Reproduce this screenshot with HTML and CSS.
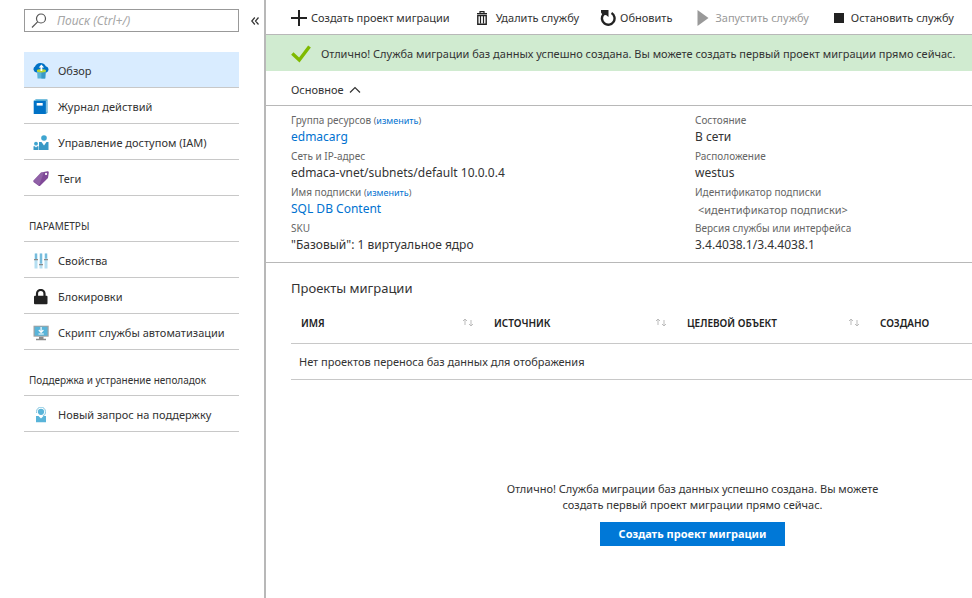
FILE: index.html
```html
<!DOCTYPE html>
<html lang="ru">
<head>
<meta charset="utf-8">
<meta name="viewport" content="width=device-width, initial-scale=1">
<title>Служба миграции баз данных</title>
<link rel="stylesheet" href="styles.css">
</head>
<body>
<div class="app">
  <aside class="sidebar">
    <div class="search-row">
      <label class="search">
        <svg class="search-icon" width="16" height="16" viewBox="0 0 16 16" fill="none" stroke="#555" stroke-width="1.2"><circle cx="10" cy="5.500" r="4.500"/><path d="M6.800 8.700 1 14.500"/></svg>
        <input type="search" placeholder="Поиск (Ctrl+/)" aria-label="Поиск">
      </label>
      <button class="collapse" type="button" aria-label="Свернуть меню">
        <svg width="8" height="8" viewBox="0 0 8 8" fill="none" stroke="#333" stroke-width="1.200"><path d="M3.800.5.800 4l3 3.500M7.500.5l-3 3.500 3 3.500"/></svg>
      </button>
    </div>

    <nav>
      <ul class="menu">
        <li><a class="item active" href="#">
          <svg width="16" height="16" viewBox="0 0 16 16"><path d="M3.500 9.500A3.200 3.200 0 0 1 2 3.600 6 6 0 0 1 12.800 3.200 3.300 3.300 0 0 1 13.500 9.500z" fill="#0072c6"/><path d="M4 7.500h8.800l-.6 8H4.500z" fill="#59b4d9"/><path d="M8.400 7.500h4.400l-.6 8H8.400z" fill="#3999c6"/><ellipse cx="8.400" cy="7.700" rx="4.600" ry="1.700" fill="#b8d432"/><path d="M7.500 8V4.500H5.700l2.700-3 2.700 3H9.300V8z" fill="#fff"/></svg>
          Обзор</a></li>
        <li><a class="item" href="#">
          <svg width="16" height="16" viewBox="0 0 16 16"><path d="M2.500.5H14.500v13.500L12.500 15z" fill="#3999c6"/><path d="M12.800 1.500h.9v12h-.9z" fill="#a8d4ec"/><path d="M.7 1.700h12V15H.7z" fill="#0072c6"/><path d="M.7 1.700 2.500.5h12l-1.800 1.200z" fill="#59b4d9"/><path d="M3.700 4h6v2.600h-6z" fill="#fff"/></svg>
          Журнал действий</a></li>
        <li><a class="item" href="#">
          <svg width="16" height="16" viewBox="0 0 16 16"><circle cx="11" cy="3" r="2.800" fill="#3fa5d0"/><path d="M6 15V7h2.500L11 10.500 13.500 7h2v8z" fill="#3999c6"/><circle cx="3" cy="8.700" r="1.900" fill="#3fa5d0"/><path d="M.5 15v-3.800h1.300L3 12.600l1.200-1.400h1.300V15z" fill="#3999c6"/></svg>
          Управление доступом (IAM)</a></li>
        <li><a class="item" href="#">
          <svg width="16" height="16" viewBox="0 0 16 16"><path fill-rule="evenodd" d="M.3 9.700 8 1.500 14.500.2q1.300-.1 1.300 1.200L15 7l-7.800 7.700q-.8.700-1.600 0L.5 11zM13 1.800a1.100 1.100 0 1 0 .1 0z" fill="#804998"/><path d="m.3 9.700 7.700-8.200 3-.6-5 13.800z" fill="#a07ab5" opacity=".5"/></svg>
          Теги</a></li>
      </ul>

      <h2 class="group">ПАРАМЕТРЫ</h2>
      <ul class="menu">
        <li><a class="item" href="#">
          <svg width="16" height="16" viewBox="0 0 16 16"><path d="M1.500.5h3v15h-3zM6.500.5h3v15h-3zM11.500.5h3v15h-3z" fill="#b5dff2"/><path d="M2.500.5h1v6h-1zM7.500.5h1v10h-1zM12.500.5h1v5h-1z" fill="#3999c6"/><path d="M1 6h4v1.200H1zM6 11h4v1.200H6zM11 6h4v1.200h-4z" fill="#8a8a8a"/></svg>
          Свойства</a></li>
        <li><a class="item" href="#">
          <svg width="16" height="16" viewBox="0 0 16 16"><path d="M4 8V4.700a3.700 3.700 0 0 1 7.500 0V8" fill="none" stroke="#222" stroke-width="2.200"/><rect x="1" y="6.800" width="13.500" height="8.500" rx="1" fill="#222"/></svg>
          Блокировки</a></li>
        <li><a class="item" href="#">
          <svg width="16" height="16" viewBox="0 0 16 16"><path d="M.5.700h15.200v11H.5z" fill="#a0a1a2"/><path d="M1.700 1.700h12.800v9H1.700z" fill="#59b4d9"/><path d="M6 11.700h4.500v2H13v1.500H3v-1.500h3z" fill="#8a8a8a"/><path d="M8.100 2v5M5.800 5l2.300 2.300L10.400 5M5.500 9h5.300" stroke="#fff" stroke-width="1.200" fill="none"/></svg>
          Скрипт службы автоматизации</a></li>
      </ul>

      <h2 class="group">Поддержка и устранение неполадок</h2>
      <ul class="menu">
        <li><a class="item" href="#">
          <svg width="16" height="16" viewBox="0 0 16 16"><circle cx="8" cy="4.800" r="3.100" fill="#59b4d9"/><path d="M3.600 6V4.500a4.400 4.400 0 0 1 8.800 0V6q0 2.300-2.500 2.600" fill="none" stroke="#7fc4e0"/><path d="M3 15.300V9h2.500L8 11.500 10.500 9H13v6.300z" fill="#59b4d9"/></svg>
          Новый запрос на поддержку</a></li>
      </ul>
    </nav>
  </aside>

  <main class="main">
    <div class="toolbar">
      <button class="tool" type="button"><svg width="16" height="16" viewBox="0 0 16 16"><path d="M0 8h16M8 0v16" stroke="#222" stroke-width="2"/></svg>Создать проект миграции</button>
      <button class="tool delete" type="button"><svg width="12" height="14" viewBox="0 0 12 14"><path d="M1 2.700h10M4 2V.6h4V2" fill="none" stroke="#222" stroke-width="1.200"/><path d="M1.800 4.500h8.400v8.700H1.800z" fill="none" stroke="#222" stroke-width="1.400"/><path d="M4.500 5v7.500M7.500 5v7.500" stroke="#222" stroke-width="1.200"/></svg>Удалить службу</button>
      <button class="tool refresh" type="button"><svg width="16" height="16" viewBox="0 0 16 16"><path d="M11.500 3A6.300 6.300 0 1 1 3.300 4.500" fill="none" stroke="#222" stroke-width="2.400"/><path d="M1 0h7.500v7L6 5 3 5.500 1 2.500z" fill="#222"/></svg>Обновить</button>
      <button class="tool start" type="button" disabled><svg width="12" height="16" viewBox="0 0 12 16"><path d="M.5 0 11.500 8 .5 16z" fill="#999"/></svg>Запустить службу</button>
      <button class="tool stop" type="button"><svg width="10" height="10" viewBox="0 0 10 10"><path d="M0 0h10v10H0z" fill="#222"/></svg>Остановить службу</button>
    </div>

    <div class="banner" role="status">
      <svg width="20" height="18" viewBox="0 0 20 18"><path d="m1.300 8.500 7 6.500L18.500 1.500" fill="none" stroke="#7fba00" stroke-width="3.400"/></svg>
      <span>Отлично! Служба миграции баз данных успешно создана. Вы можете создать первый проект миграции прямо сейчас.</span>
    </div>

    <button class="essentials-toggle" type="button" aria-expanded="true">Основное
      <svg width="12" height="8" viewBox="0 0 12 8"><path d="m1 6.500 5-5 5 5" fill="none" stroke="#333" stroke-width="1.200"/></svg>
    </button>

    <div class="essentials">
      <dl>
        <dt>Группа ресурсов <small>(<a href="#">изменить</a>)</small></dt><dd><a href="#">edmacarg</a></dd>
        <dt>Сеть и IP-адрес</dt><dd>edmaca-vnet/subnets/default 10.0.0.4</dd>
        <dt>Имя подписки <small>(<a href="#">изменить</a>)</small></dt><dd><a href="#">SQL DB Content</a></dd>
        <dt>SKU</dt><dd>"Базовый": 1 виртуальное ядро</dd>
      </dl>
      <dl>
        <dt>Состояние</dt><dd>В сети</dd>
        <dt>Расположение</dt><dd>westus</dd>
        <dt>Идентификатор подписки</dt><dd class="placeholder">&lt;идентификатор подписки&gt;</dd>
        <dt>Версия службы или интерфейса</dt><dd>3.4.4038.1/3.4.4038.1</dd>
      </dl>
    </div>

    <section class="projects">
      <h1>Проекты миграции</h1>
      <table>
        <thead>
          <tr>
            <th scope="col"><div class="head">ИМЯ <svg width="12" height="10" viewBox="0 0 12 10"><path d="M3 7V1M1 3l2-2 2 2M9 2v6M7 6l2 2 2-2" fill="none" stroke="#bbb"/></svg></div></th>
            <th scope="col"><div class="head">ИСТОЧНИК <svg width="12" height="10" viewBox="0 0 12 10"><path d="M3 7V1M1 3l2-2 2 2M9 2v6M7 6l2 2 2-2" fill="none" stroke="#bbb"/></svg></div></th>
            <th scope="col"><div class="head">ЦЕЛЕВОЙ ОБЪЕКТ <svg width="12" height="10" viewBox="0 0 12 10"><path d="M3 7V1M1 3l2-2 2 2M9 2v6M7 6l2 2 2-2" fill="none" stroke="#bbb"/></svg></div></th>
            <th scope="col"><div class="head">СОЗДАНО</div></th>
          </tr>
        </thead>
        <tbody>
          <tr><td colspan="4">Нет проектов переноса баз данных для отображения</td></tr>
        </tbody>
      </table>
    </section>

    <section class="empty">
      <p>Отлично! Служба миграции баз данных успешно создана. Вы можете создать первый проект миграции прямо сейчас.</p>
      <button class="primary" type="button">Создать проект миграции</button>
    </section>
  </main>
</div>
</body>
</html>
```
FILE: styles.css
```css
* { box-sizing: border-box; }

body {
  margin: 0;
  background: #fff;
  color: #333;
  font: 11px/16px "Noto Sans", "Open Sans", sans-serif;
}

button {
  border: 0;
  padding: 0;
  background: none;
  color: inherit;
  font: inherit;
}

svg { flex: none; display: block; }
a { color: #0072d0; text-decoration: none; }

.app {
  display: grid;
  grid-template-columns: 266px minmax(0, 1fr);
  min-height: 100vh;
}

/* Sidebar */
.sidebar {
  border-right: 2px solid #b8b8b8;
  padding: 9px 0 0 24px;
}

.search-row { display: flex; align-items: center; gap: 12px; }

.search {
  display: flex;
  align-items: center;
  gap: 8px;
  width: 215px;
  height: 23px;
  padding: 0 6px;
  border: 1px solid #999;
}

.search input {
  flex: 1;
  min-width: 0;
  border: 0;
  padding: 0 2px;
  outline: 0;
  background: none;
  color: #333;
  font: inherit;
  font-size: 12px;
}
.search input::placeholder { color: #a6a6a6; font-style: italic; }

.menu { list-style: none; margin: 0; padding: 0; width: 215px; }
nav { margin-top: 20px; }

.item {
  display: flex;
  align-items: center;
  gap: 9px;
  height: 36px;
  padding: 2px 0 0 9px;
  border-bottom: 1px solid #c8c8c8;
  color: #333;
  white-space: nowrap;
}
.item.active { background: #d9ecff; }

.group {
  width: 215px;
  height: 46px;
  margin: 0;
  padding: 22px 0 0 5px;
  border-bottom: 1px solid #c8c8c8;
  font-size: 10px;
  font-weight: 400;
  white-space: nowrap;
}

/* Main area */
.toolbar {
  display: flex;
  align-items: center;
  height: 35px;
  padding: 1px 0 0 25px;
  border-bottom: 1px solid #b8b8b8;
  white-space: nowrap;
}
.tool { display: flex; align-items: center; gap: 4px; }
.tool:disabled { color: #999; }
.tool.delete { gap: 8px; margin-left: 26px; }
.tool.refresh { margin-left: 21px; }
.tool.start { gap: 6px; margin-left: 25px; }
.tool.stop { gap: 7px; margin-left: 25px; }

.banner {
  display: flex;
  align-items: center;
  gap: 10px;
  height: 36px;
  padding: 2px 0 0 25px;
  background: #d0ebd0;
  white-space: nowrap;
}

.essentials-toggle {
  display: flex;
  align-items: center;
  gap: 5px;
  width: 100%;
  height: 35px;
  padding: 3px 0 0 25px;
  border-bottom: 1px solid #b8b8b8;
}

.essentials {
  display: grid;
  grid-template-columns: 404px 1fr;
  padding: 6px 0 6px 25px;
  border-bottom: 1px solid #b8b8b8;
}
.essentials dl { margin: 0; }
.essentials dt { height: 16px; font-size: 10px; color: #666; }
.essentials small { font-size: 9px; }
.essentials dd { height: 20px; margin: 0; font-size: 12px; line-height: 18px; }
.essentials dd.placeholder { padding-left: 3px; font-size: 11px; line-height: 20px; color: #666; }

.projects { padding: 15px 0 0 25px; }
.projects h1 { margin: 0; font-size: 13px; line-height: 20px; font-weight: 400; }

table { width: 100%; margin-top: 4px; border-collapse: collapse; table-layout: fixed; }
th, td { border-bottom: 1px solid #c8c8c8; text-align: left; }
th { width: 193px; height: 41px; padding: 2px 10px 0; font-size: 10px; font-weight: 600; color: #222; white-space: nowrap; }
th:last-child { width: auto; }
.head { display: flex; justify-content: space-between; align-items: center; }
td { height: 36px; padding: 2px 8px 0; }

.empty {
  display: flex;
  flex-direction: column;
  align-items: center;
  padding: 101px 0 24px 147px;
  text-align: center;
}
.empty p { max-width: 400px; margin: 0 0 9px; }

.primary {
  width: 185px;
  height: 24px;
  background: #0078d7;
  color: #fff;
  font-weight: 700;
}
```
